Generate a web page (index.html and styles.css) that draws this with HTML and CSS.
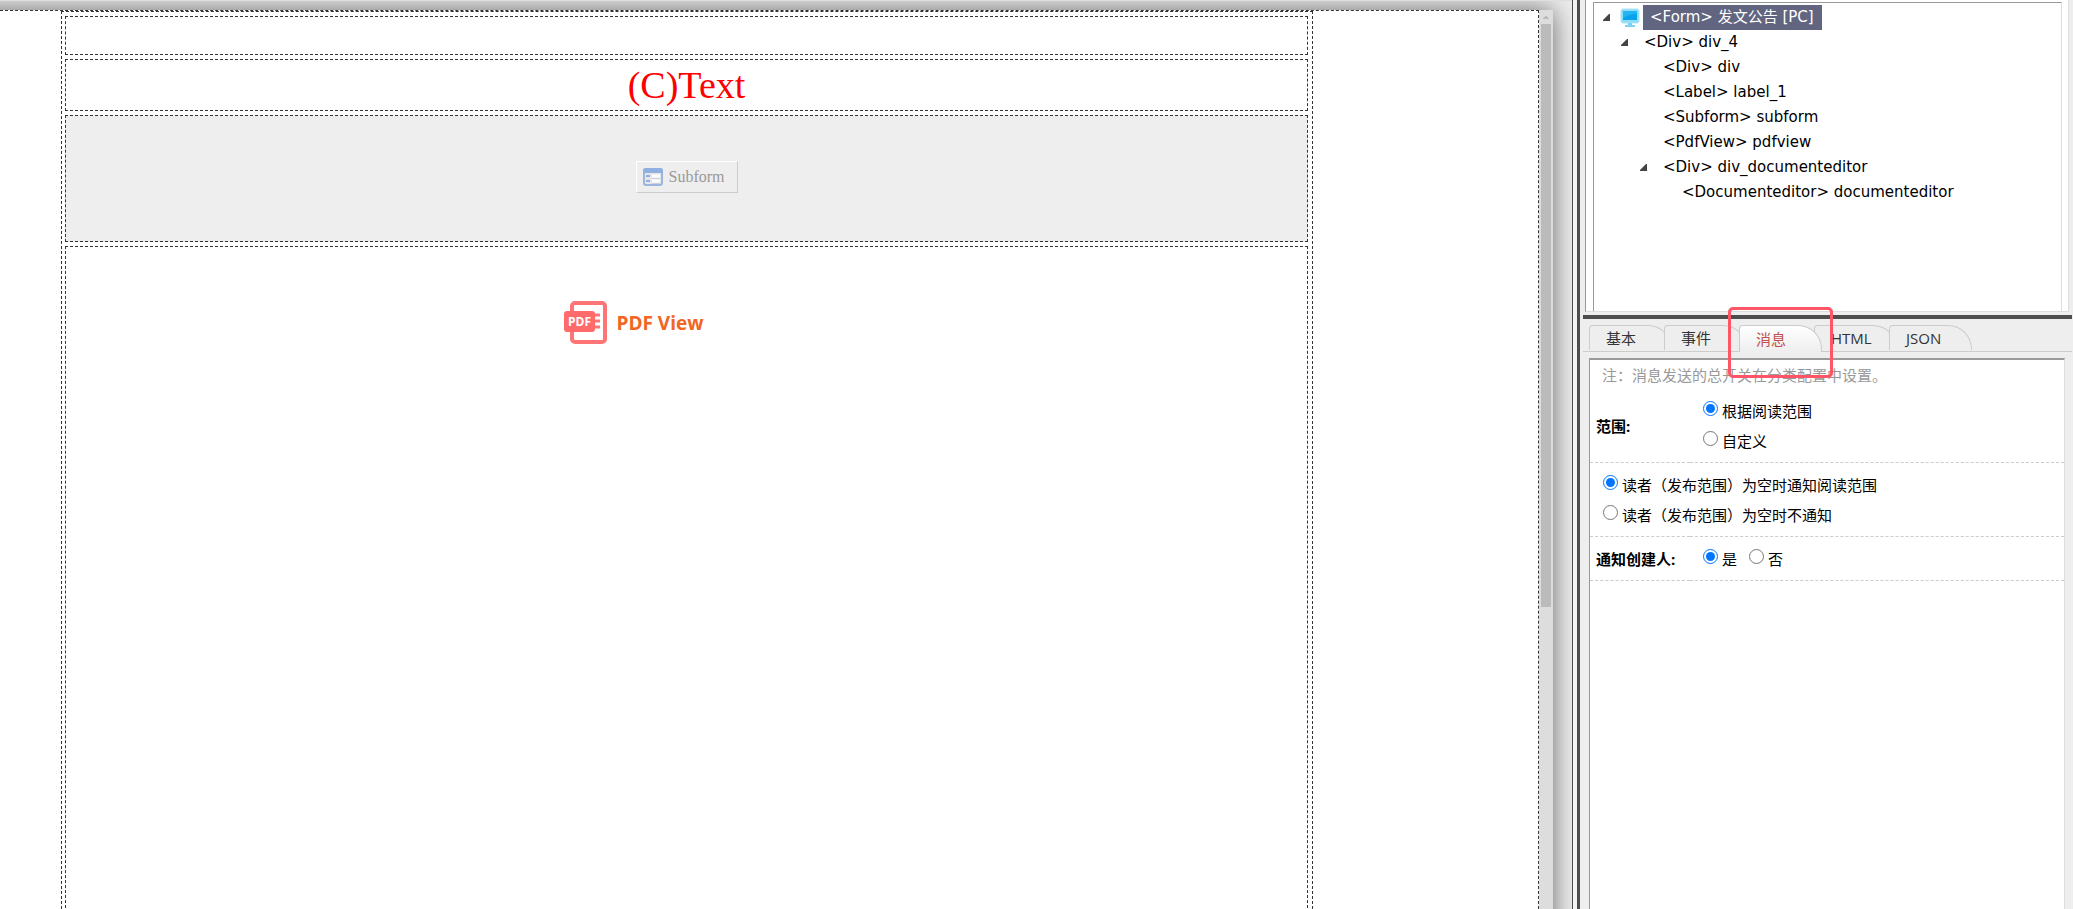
FILE: index.html
```html
<!DOCTYPE html>
<html lang="zh-CN">
<head>
    <meta charset="UTF-8">
    <meta name="viewport" content="width=device-width, initial-scale=1.0">
    <title>发文公告</title>
    <link rel="stylesheet" href="styles.css">
</head>
<body>
    <main class="designer">
        <div class="canvas">
            <div class="page">
                <div class="form-root">
                    <div class="block block-empty"></div>
                    <div class="block block-label">(C)Text</div>
                    <div class="block block-subform">
                        <button type="button" class="subform-button">
                            <svg width="20" height="18" viewBox="0 0 20 18">
                                <rect x="1" y="1" width="18" height="16" rx="2" fill="#e4e6ea" stroke="#9cb6de" stroke-width="2"/>
                                <path d="M0 3q0-3 3-3h14q3 0 3 3v2H0z" fill="#8fb0e0"/>
                                <path d="M3 8h4M3 13h4" stroke="#8fafdc" stroke-width="2"/>
                                <path d="M9 8h8M9 13h8" stroke="#fff" stroke-width="3"/>
                                <path d="M9 10.500h8M9 15.500h8" stroke="#ccd0d8"/>
                            </svg>
                            <span>Subform</span>
                        </button>
                    </div>
                    <div class="block block-pdf">
                        <svg width="43" height="43" viewBox="0 0 43 43">
                            <rect x="8" y="2" width="33" height="39" rx="3" fill="#fff" stroke="#ff7474" stroke-width="4"/>
                            <path d="M28 14h8M28 20h8M28 26h8" stroke="#ff7474" stroke-width="3"/>
                            <rect x="0" y="10" width="31" height="21" rx="3" fill="#ff6b6b"/>
                            <text x="4" y="25" class="pdf-mark">PDF</text>
                        </svg>
                        <span class="pdf-title">PDF View</span>
                    </div>
                </div>
            </div>
            <div class="scrollbar">
                <svg width="6" height="3" viewBox="0 0 6 3"><path d="M0 3V2h1V1h1V0h2v1h1v1h1v1z" fill="#bbb"/></svg>
                <div class="scroll-thumb"></div>
            </div>
        </div>
    </main>

    <div class="splitter"></div>

    <aside class="side">
        <div class="tree-frame">
            <ul class="tree">
                <li class="node level-0">
                    <svg class="arrow" width="9" height="9" viewBox="0 0 9 9"><path d="M7 1h1v7H1V7z" fill="#444"/></svg>
                    <svg class="node-icon" width="20" height="20" viewBox="0 0 20 20">
                        <rect x="1" y="1" width="18" height="14" rx="2" fill="#8edcf8" stroke="#a9e5fa"/>
                        <rect x="3" y="3" width="14" height="9" fill="#0aa2ea"/>
                        <path d="M3 3h14v3q-8 0-14 4z" fill="#22b5f2"/>
                        <path d="M8 15h4v2h3v2H5v-2h3z" fill="#7fd2f2"/>
                    </svg>
                    <span class="node-text selected">&lt;Form&gt; 发文公告 [PC]</span>
                </li>
                <li class="node level-1">
                    <svg class="arrow" width="9" height="9" viewBox="0 0 9 9"><path d="M7 1h1v7H1V7z" fill="#444"/></svg>
                    <span class="node-text">&lt;Div&gt; div_4</span>
                </li>
                <li class="node level-2"><span class="arrow"></span><span class="node-text">&lt;Div&gt; div</span></li>
                <li class="node level-2"><span class="arrow"></span><span class="node-text">&lt;Label&gt; label_1</span></li>
                <li class="node level-2"><span class="arrow"></span><span class="node-text">&lt;Subform&gt; subform</span></li>
                <li class="node level-2"><span class="arrow"></span><span class="node-text">&lt;PdfView&gt; pdfview</span></li>
                <li class="node level-2">
                    <svg class="arrow" width="9" height="9" viewBox="0 0 9 9"><path d="M7 1h1v7H1V7z" fill="#444"/></svg>
                    <span class="node-text">&lt;Div&gt; div_documenteditor</span>
                </li>
                <li class="node level-3"><span class="arrow"></span><span class="node-text">&lt;Documenteditor&gt; documenteditor</span></li>
            </ul>
        </div>

        <div class="properties">
            <div class="tabs">
                <button type="button" class="tab">基本</button>
                <button type="button" class="tab">事件</button>
                <button type="button" class="tab active">消息<span class="marker"></span></button>
                <button type="button" class="tab">HTML</button>
                <button type="button" class="tab">JSON</button>
            </div>
            <div class="panel">
                <p class="note">注：消息发送的总开关在分类配置中设置。</p>
                <table class="settings">
                    <tr>
                        <th scope="row">范围:</th>
                        <td>
                            <label class="option"><input type="radio" name="scope" checked>根据阅读范围</label><br>
                            <label class="option"><input type="radio" name="scope">自定义</label>
                        </td>
                    </tr>
                    <tr>
                        <td colspan="2">
                            <label class="option"><input type="radio" name="reader" checked>读者（发布范围）为空时通知阅读范围</label><br>
                            <label class="option"><input type="radio" name="reader">读者（发布范围）为空时不通知</label>
                        </td>
                    </tr>
                    <tr>
                        <th scope="row">通知创建人:</th>
                        <td>
                            <label class="option"><input type="radio" name="creator" checked>是</label>
                            <label class="option"><input type="radio" name="creator">否</label>
                        </td>
                    </tr>
                </table>
            </div>
        </div>
    </aside>
</body>
</html>
```
FILE: styles.css
```css
* {
    box-sizing: border-box;
}

body {
    margin: 0;
    height: 100vh;
    display: flex;
    overflow: hidden;
    background-color: #eee;
    color: #000;
    font-family: "Open Sans", "Noto Sans CJK SC", sans-serif;
    font-size: 15px;
}

/* form designer */
.designer {
    flex: 1;
    min-width: 0;
    display: flex;
    padding: 9px 19px 0 0;
    border-top: 1px solid #dfdfdf;
    overflow: hidden;
}

/* starts outside the window so the shadow does not fade at the left */
.canvas {
    flex: 1;
    display: flex;
    margin: 0 0 -40px -40px;
    background-color: #fff;
    box-shadow: 0 0 25px #666;
}

.page {
    flex: 1;
    display: flex;
    padding: 0 225px 0 101px;
    border-top: 1px dashed #333;
    border-right: 1px dashed #333;
}

.form-root {
    flex: 1;
    display: flex;
    flex-direction: column;
    gap: 4px;
    padding: 4px 4px 0 3px;
    border: 1px dashed #333;
}

.block {
    display: flex;
    align-items: center;
    justify-content: center;
    border: 1px dashed #333;
}

.block-empty {
    min-height: 39px;
}

.block-label {
    padding: 4px 0;
    color: #f00;
    font-family: "Liberation Serif", serif;
    font-size: 38px;
    line-height: 42px;
}

.block-subform {
    padding: 45px 0 48px;
    background-color: #eee;
}

.subform-button {
    display: flex;
    align-items: center;
    gap: 6px;
    height: 32px;
    padding: 0 12px 0 6px;
    border: 1px solid;
    border-color: #fff #ccc #ccc #fff;
    background-color: #eee;
    color: #999;
    font-family: "Liberation Serif", serif;
    font-size: 16px;
}

.block-pdf {
    flex: 1;
    align-items: flex-start;
    gap: 10px;
    padding: 54px 106px 0 0;
}

.pdf-mark {
    fill: #fff;
    font-size: 12px;
    font-weight: bold;
}

.pdf-title {
    color: #f26522;
    font-size: 19px;
    font-weight: bold;
    line-height: 44px;
}

.scrollbar {
    width: 14px;
    display: flex;
    flex-direction: column;
    align-items: center;
    gap: 5px;
    padding-top: 6px;
    background-color: #ddd;
}

.scroll-thumb {
    width: 10px;
    height: 62.5%;
    background-color: #bbb;
}

.splitter {
    width: 8px;
    border-left: 1px solid #4d4d4d;
    border-right: 3px solid #4d4d4d;
    background-color: #f3f3f3;
}

/* right side */
.side {
    width: 493px;
    display: flex;
    flex-direction: column;
    padding: 0 1px 0 3px;
}

.tree-frame {
    height: 312px;
    margin: 0 3px 3px 2px;
    padding: 2px 6px 0 7px;
    border: 1px solid #ddd;
    border-top: none;
    border-left-color: #999;
    background-color: #fff;
}

.tree {
    height: 100%;
    margin: 0;
    padding: 2px 0;
    border: 1px solid #ddd;
    border-top-color: #999;
    border-left-color: #999;
    border-bottom: none;
    list-style: none;
    font-family: "DejaVu Sans", "Noto Sans CJK SC", sans-serif;
}

.node {
    display: flex;
    align-items: center;
    height: 25px;
}

.arrow {
    width: 9px;
    margin-right: 9px;
}

.node-icon {
    margin-right: 3px;
}

.node-text {
    padding: 0 6px;
    line-height: 25px;
    white-space: nowrap;
}

.selected {
    padding: 0 8px 0 7px;
    background-color: #62657f;
    color: #fff;
}

.level-0 {
    padding-left: 8px;
}

.level-1 {
    padding-left: 26px;
}

.level-2 {
    padding-left: 45px;
}

.level-3 {
    padding-left: 64px;
}

.properties {
    flex: 1;
    display: flex;
    flex-direction: column;
    border-top: 4px solid #4d4d4d;
}

.tabs {
    display: flex;
    height: 33px;
    padding: 6px 0 0 6px;
    border-bottom: 1px solid #ccc;
}

.tab {
    width: 83px;
    height: 25px;
    margin-right: -8px;
    padding: 0 0 0 16px;
    border: 1px solid #ccc;
    border-bottom: none;
    border-radius: 4px 24px 0 0;
    background-color: #eee;
    color: #333;
    font: inherit;
    line-height: 24px;
    text-align: left;
}

.tab.active {
    position: relative;
    z-index: 1;
    height: 27px;
    background: linear-gradient(#fff, #eee);
    color: #c0504d;
}

/* red frame around the current tab */
.marker {
    position: absolute;
    top: -19px;
    left: -12px;
    width: 105px;
    height: 71px;
    border: 3px solid #ff5566;
    border-radius: 5px;
    pointer-events: none;
}

.panel {
    flex: 1;
    margin: 6px 7px 0 6px;
    border: 1px solid #ddd;
    border-top: 2px solid #999;
    border-left-color: #999;
    border-bottom: none;
    background-color: #fff;
}

.note {
    margin: 0;
    padding: 3px 12px 2px;
    color: #999;
    line-height: 24px;
}

.settings {
    width: 100%;
    border-collapse: collapse;
}

.settings th,
.settings td {
    padding: 7px 8px 6px;
    border-bottom: 1px dashed #ccc;
    line-height: 30px;
    text-align: left;
}

.settings th {
    width: 100px;
    padding-left: 6px;
    padding-right: 0;
    white-space: nowrap;
}

.option {
    margin-right: 3px;
}

.option input {
    width: 15px;
    height: 15px;
    margin: 0 4px 0 5px;
    vertical-align: 1px;
    accent-color: #0075ff;
}
```
